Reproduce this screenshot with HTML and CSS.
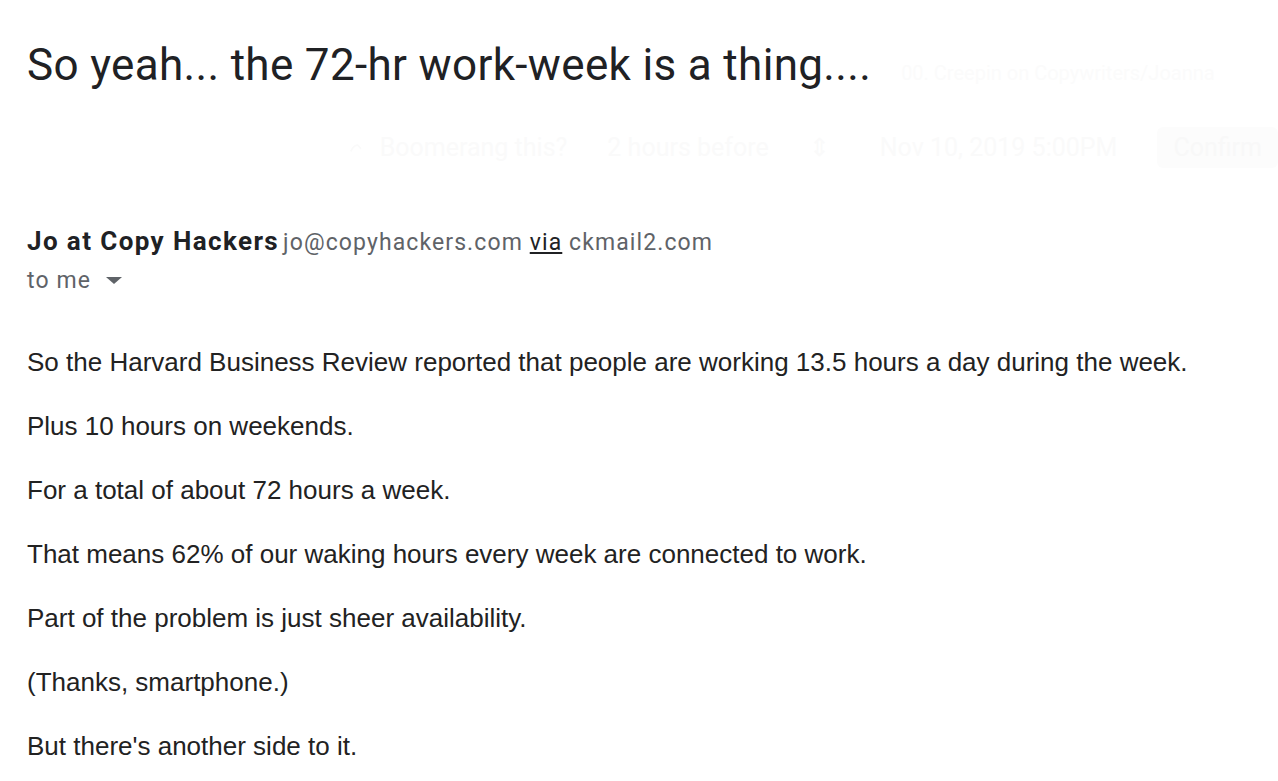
FILE: index.html
```html
<!DOCTYPE html>
<html lang="en">
<head>
    <meta charset="UTF-8">
    <meta name="viewport" content="width=device-width, initial-scale=1.0">
    <title>So yeah... the 72-hr work-week is a thing....</title>
    <link rel="stylesheet" href="styles.css">
</head>
<body>

    <div class="mail">
        <!-- Judul email + label samar di kanan -->
        <div class="subject-row">
            <h1 class="subject">So yeah... the 72-hr work-week is a thing....</h1>
            <span class="ghost-label">00. Creepin on Copywriters/Joanna</span>
        </div>

        <!-- Bar Boomerang yang hampir tidak terlihat -->
        <div class="boomerang">
            <svg class="ghost-icon" width="30" height="20" viewBox="0 0 30 20">
                <path d="M2 18 C6 8 12 3 18 3 L26 12" fill="none" stroke="#fafafa" stroke-width="4"/>
            </svg>
            <span class="ghost-text first">Boomerang this?</span>
            <span class="ghost-text">2 hours before</span>
            <span class="ghost-arrows">&#8661;</span>
            <span class="ghost-text">Nov 10, 2019 5:00PM</span>
            <span class="ghost-btn">Confirm</span>
        </div>

        <!-- Pengirim -->
        <div class="sender">
            <div class="from">
                <span class="name">Jo at Copy Hackers</span>
                <span class="address">jo@copyhackers.com <u>via</u> ckmail2.com</span>
            </div>
            <div class="to">
                to me
                <svg class="caret" width="16" height="8" viewBox="0 0 16 8">
                    <path d="M0 0 L16 0 L8 7 Z" fill="#5f6368"/>
                </svg>
            </div>
        </div>

        <!-- Isi email -->
        <div class="body-text">
            <p>So the Harvard Business Review reported that people are working 13.5 hours a day during the week.</p>
            <p>Plus 10 hours on weekends.</p>
            <p>For a total of about 72 hours a week.</p>
            <p>That means 62% of our waking hours every week are connected to work.</p>
            <p>Part of the problem is just sheer availability.</p>
            <p>(Thanks, smartphone.)</p>
            <p>But there's another side to it.</p>
        </div>
    </div>

</body>
</html>
```

FILE: styles.css
```css
body {
    margin: 0;
    background-color: #fff;
    overflow: hidden;
}

/* Container utama */
.mail {
    padding: 0 0 0 27px;
}

.subject-row {
    display: flex;
    align-items: baseline;
    white-space: nowrap;
    overflow: hidden;
}

.subject {
    font-family: Roboto, "Noto Sans", sans-serif;
    font-weight: 400;
    font-size: 44px;
    line-height: 52px;
    letter-spacing: 0.34px;
    color: #202124;
    margin: 39px 0 0 0;
}

.ghost-label {
    font-family: Roboto, sans-serif;
    font-size: 20px;
    color: #fbfbfb;
    margin-left: 30px;
}

/* Bar Boomerang */
.boomerang {
    display: flex;
    align-items: center;
    height: 45px;
    margin-top: 34px;
    padding-left: 323px;
    white-space: nowrap;
    overflow: hidden;
    font-family: Roboto, sans-serif;
    font-size: 25px;
    color: #fafafa;
}

.ghost-icon {
    margin-right: 17px;
}

.ghost-text {
    margin-right: 40px;
}

.ghost-arrows {
    margin-right: 50px;
}

.ghost-btn {
    background-color: #fcfcfc;
    border-radius: 6px;
    padding: 6px 16px;
    color: #f8f8f8;
}

/* Pengirim */
.sender {
    margin-top: 55px;
    font-family: Roboto, sans-serif;
}

.from {
    line-height: 32px;
    white-space: nowrap;
}

.name {
    font-size: 26px;
    font-weight: 700;
    letter-spacing: 1.4px;
    color: #202124;
}

.address {
    font-size: 23px;
    letter-spacing: 1.1px;
    color: #5f6368;
}

.address u {
    color: #202124;
}

.to {
    margin-top: 4px;
    font-size: 23px;
    line-height: 32px;
    letter-spacing: 1.1px;
    color: #5f6368;
}

.caret {
    margin-left: 8px;
    vertical-align: 3px;
}

/* Isi email */
.body-text {
    margin-top: 49px;
    font-family: "Liberation Sans", Arial, sans-serif;
    font-size: 26px;
    color: #222;
}

.body-text p {
    margin: 0 0 32px 0;
    line-height: 32px;
}
```
